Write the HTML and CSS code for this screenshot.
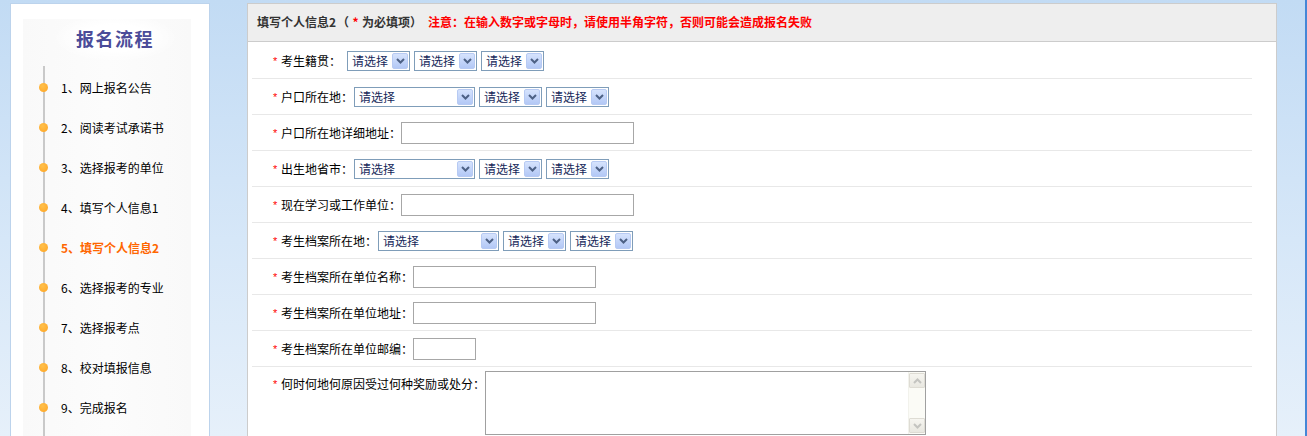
FILE: index.html
```html
<!DOCTYPE html>
<html lang="zh-CN">
<head>
<meta charset="utf-8">
<title>填写个人信息2</title>
<link rel="stylesheet" href="styles.css">
</head>
<body>
<div class="page">
  <aside class="side">
    <div class="side-inner">
      <h2 class="side-title">报名流程</h2>
      <ol class="steps">
        <li>1、网上报名公告</li>
        <li>2、阅读考试承诺书</li>
        <li>3、选择报考的单位</li>
        <li>4、填写个人信息1</li>
        <li class="active">5、填写个人信息2</li>
        <li>6、选择报考的专业</li>
        <li>7、选择报考点</li>
        <li>8、校对填报信息</li>
        <li>9、完成报名</li>
      </ol>
    </div>
  </aside>

  <main class="panel">
    <div class="panel-head">填写个人信息2<span class="paren-l">（</span><span class="req">*</span>为必填项<span class="paren-r">）</span><span class="warn">注意：在输入数字或字母时，请使用半角字符，否则可能会造成报名失败</span></div>
    <div class="form">
      <div class="row">
        <label class="lbl"><span class="star">*</span>考生籍贯：</label>
        <div class="ctrls ctrls-wide">
          <span class="sel"><span class="sel-text">请选择</span><span class="sel-btn"><svg width="9" height="6" viewBox="0 0 9 6"><path d="M1 1l3.5 3.5L8 1" fill="none" stroke="#4d6185" stroke-width="2"/></svg></span></span>
          <span class="sel"><span class="sel-text">请选择</span><span class="sel-btn"><svg width="9" height="6" viewBox="0 0 9 6"><path d="M1 1l3.5 3.5L8 1" fill="none" stroke="#4d6185" stroke-width="2"/></svg></span></span>
          <span class="sel"><span class="sel-text">请选择</span><span class="sel-btn"><svg width="9" height="6" viewBox="0 0 9 6"><path d="M1 1l3.5 3.5L8 1" fill="none" stroke="#4d6185" stroke-width="2"/></svg></span></span>
        </div>
      </div>

      <div class="row">
        <label class="lbl"><span class="star">*</span>户口所在地：</label>
        <div class="ctrls">
          <span class="sel sel-lg"><span class="sel-text">请选择</span><span class="sel-btn"><svg width="9" height="6" viewBox="0 0 9 6"><path d="M1 1l3.5 3.5L8 1" fill="none" stroke="#4d6185" stroke-width="2"/></svg></span></span>
          <span class="sel"><span class="sel-text">请选择</span><span class="sel-btn"><svg width="9" height="6" viewBox="0 0 9 6"><path d="M1 1l3.5 3.5L8 1" fill="none" stroke="#4d6185" stroke-width="2"/></svg></span></span>
          <span class="sel"><span class="sel-text">请选择</span><span class="sel-btn"><svg width="9" height="6" viewBox="0 0 9 6"><path d="M1 1l3.5 3.5L8 1" fill="none" stroke="#4d6185" stroke-width="2"/></svg></span></span>
        </div>
      </div>

      <div class="row">
        <label class="lbl"><span class="star">*</span>户口所在地详细地址：</label>
        <input type="text" class="txt txt-lg">
      </div>

      <div class="row">
        <label class="lbl"><span class="star">*</span>出生地省市：</label>
        <div class="ctrls">
          <span class="sel sel-lg"><span class="sel-text">请选择</span><span class="sel-btn"><svg width="9" height="6" viewBox="0 0 9 6"><path d="M1 1l3.5 3.5L8 1" fill="none" stroke="#4d6185" stroke-width="2"/></svg></span></span>
          <span class="sel"><span class="sel-text">请选择</span><span class="sel-btn"><svg width="9" height="6" viewBox="0 0 9 6"><path d="M1 1l3.5 3.5L8 1" fill="none" stroke="#4d6185" stroke-width="2"/></svg></span></span>
          <span class="sel"><span class="sel-text">请选择</span><span class="sel-btn"><svg width="9" height="6" viewBox="0 0 9 6"><path d="M1 1l3.5 3.5L8 1" fill="none" stroke="#4d6185" stroke-width="2"/></svg></span></span>
        </div>
      </div>

      <div class="row">
        <label class="lbl"><span class="star">*</span>现在学习或工作单位：</label>
        <input type="text" class="txt txt-lg">
      </div>

      <div class="row">
        <label class="lbl"><span class="star">*</span>考生档案所在地：</label>
        <div class="ctrls">
          <span class="sel sel-lg"><span class="sel-text">请选择</span><span class="sel-btn"><svg width="9" height="6" viewBox="0 0 9 6"><path d="M1 1l3.5 3.5L8 1" fill="none" stroke="#4d6185" stroke-width="2"/></svg></span></span>
          <span class="sel"><span class="sel-text">请选择</span><span class="sel-btn"><svg width="9" height="6" viewBox="0 0 9 6"><path d="M1 1l3.5 3.5L8 1" fill="none" stroke="#4d6185" stroke-width="2"/></svg></span></span>
          <span class="sel"><span class="sel-text">请选择</span><span class="sel-btn"><svg width="9" height="6" viewBox="0 0 9 6"><path d="M1 1l3.5 3.5L8 1" fill="none" stroke="#4d6185" stroke-width="2"/></svg></span></span>
        </div>
      </div>

      <div class="row">
        <label class="lbl"><span class="star">*</span>考生档案所在单位名称：</label>
        <input type="text" class="txt txt-md">
      </div>

      <div class="row">
        <label class="lbl"><span class="star">*</span>考生档案所在单位地址：</label>
        <input type="text" class="txt txt-md">
      </div>

      <div class="row">
        <label class="lbl"><span class="star">*</span>考生档案所在单位邮编：</label>
        <input type="text" class="txt txt-sm">
      </div>

      <div class="row row-area">
        <label class="lbl lbl-top"><span class="star">*</span>何时何地何原因受过何种奖励或处分：</label>
        <div class="area">
          <textarea class="area-input"></textarea>
          <div class="vscroll">
            <span class="sb-btn"><svg width="9" height="6" viewBox="0 0 9 6"><path d="M1 5l3.5-3.5L8 5" fill="none" stroke="#c4c4c0" stroke-width="2"/></svg></span>
            <span class="sb-btn"><svg width="9" height="6" viewBox="0 0 9 6"><path d="M1 1l3.5 3.5L8 1" fill="none" stroke="#c4c4c0" stroke-width="2"/></svg></span>
          </div>
        </div>
      </div>
    </div>
  </main>
</div>
</body>
</html>
```

FILE: styles.css
```css
html, body {
  margin: 0;
  padding: 0;
}

body {
  font-family: "Noto Sans CJK SC", "Liberation Sans", sans-serif;
  font-size: 12px;
  color: #000;
}

.page {
  width: 1307px;
  height: 436px;
  box-sizing: border-box;
  overflow: hidden;
  display: flex;
  align-items: stretch;
  padding: 3px 0 0 10px;
  background: linear-gradient(#c2dbf4 0%, #d6e7f8 55%, #e6f0fa 100%);
  border-right: 2px solid #4586d6;
}

/* ---------- left side: steps ---------- */
.side {
  width: 200px;
  flex: none;
  box-sizing: border-box;
  border: 1px solid #bcd3ec;
  border-bottom: none;
  background: #fff;
  display: flex;
  flex-direction: column;
}

.side-inner {
  flex: 1;
  margin: 15px 18px 0 12px;
  background: linear-gradient(90deg, #f9f9f9, #fcfcfc 50%, #f9f9f9);
}

.side-title {
  margin: 0;
  height: 47px;
  line-height: 38px;
  padding-left: 53px;
  font-size: 18px;
  font-weight: bold;
  letter-spacing: 1.5px;
  color: #4b4c99;
  background: radial-gradient(ellipse 62px 24px at 55% 40%, #ffffff 55%, rgba(255,255,255,0) 100%);
}

.steps {
  list-style: none;
  margin: 0 0 0 20px;
  padding: 2px 0 0 0;
  border-left: 2px solid #c9c9c9;
  min-height: 400px;
}

.steps li {
  position: relative;
  height: 40px;
  line-height: 40px;
  padding-left: 16px;
  white-space: nowrap;
}

.steps li::before {
  content: "";
  position: absolute;
  left: -6px;
  top: 15px;
  width: 9px;
  height: 9px;
  border-radius: 50%;
  background: radial-gradient(circle at 40% 35%, #ffc04a, #ffa424);
}

.steps li.active {
  color: #ff6600;
  font-weight: bold;
}

/* ---------- right panel ---------- */
.panel {
  width: 1030px;
  flex: none;
  margin-left: 37px;
  box-sizing: border-box;
  border: 1px solid #cccccc;
  border-bottom: none;
  background: #fff;
}

.panel-head {
  height: 38px;
  box-sizing: border-box;
  padding: 0 0 2px 9px;
  display: flex;
  align-items: center;
  background: #eeeeee;
  border-bottom: 1px solid #cccccc;
  font-weight: bold;
  color: #333;
  white-space: nowrap;
}

.paren-l,
.paren-r {
  display: inline-block;
  width: 12px;
}

.paren-l {
  text-align: right;
  margin-left: 1px;
}

.paren-r {
  text-align: left;
}

.req {
  display: inline-block;
  width: 13px;
  text-align: center;
  color: #ff0000;
}

.warn {
  color: #ff0000;
  margin-left: 6px;
}

.form {
  width: 1000px;
  margin: 1px 0 0 4px;
}

.row {
  display: flex;
  align-items: center;
  height: 35px;
  padding-left: 21px;
  border-bottom: 1px solid #e8e8e8;
}

.row-area {
  height: auto;
  align-items: flex-start;
  padding-top: 4px;
  border-bottom: none;
}

.lbl {
  white-space: nowrap;
  color: #000;
}

.lbl-top {
  margin-top: 3px;
  line-height: 20px;
}

.star {
  display: inline-block;
  width: 8px;
  color: #ff0000;
  font-family: "Liberation Sans", sans-serif;
  font-size: 11px;
  vertical-align: 1px;
}

.ctrls {
  display: flex;
  gap: 4px;
  margin-left: 1px;
}

.ctrls-wide {
  margin-left: 6px;
}

/* fake XP-style select */
.sel {
  display: inline-flex;
  align-items: center;
  width: 63px;
  height: 20px;
  box-sizing: border-box;
  border: 1px solid #7f9db9;
  background: #fff;
  padding: 1px;
}

.sel-lg {
  width: 121px;
}

.sel-text {
  flex: 1;
  padding-left: 3px;
  line-height: 16px;
  color: #16285a;
}

.sel-btn {
  width: 16px;
  height: 16px;
  box-sizing: border-box;
  border: 1px solid #b7caf3;
  border-radius: 2px;
  background: linear-gradient(#d6e3fd, #b3c8f6);
  display: flex;
  align-items: center;
  justify-content: center;
}

.txt {
  height: 22px;
  box-sizing: border-box;
  border: 1px solid #a7a7a7;
  padding: 0 2px;
  margin: 0;
  font: inherit;
  background: #fff;
}

.txt-lg { width: 233px; }
.txt-md { width: 183px; }
.txt-sm { width: 63px; }

.area {
  display: flex;
  width: 441px;
  height: 64px;
  box-sizing: border-box;
  border: 1px solid #a0a0a0;
  background: #fff;
}

.area-input {
  flex: 1;
  border: none;
  margin: 0;
  padding: 2px;
  resize: none;
  overflow: hidden;
  font: inherit;
  outline: none;
}

.vscroll {
  width: 16px;
  flex: none;
  display: flex;
  flex-direction: column;
  justify-content: space-between;
  padding: 1px 0;
  background: #fbfbf6;
  border-left: 1px solid #f2f2ec;
}

.sb-btn {
  height: 15px;
  box-sizing: border-box;
  border: 1px solid #dedcd4;
  border-radius: 1px;
  background: linear-gradient(#f6f5f0, #e9e8e1);
  display: flex;
  align-items: center;
  justify-content: center;
}
```
